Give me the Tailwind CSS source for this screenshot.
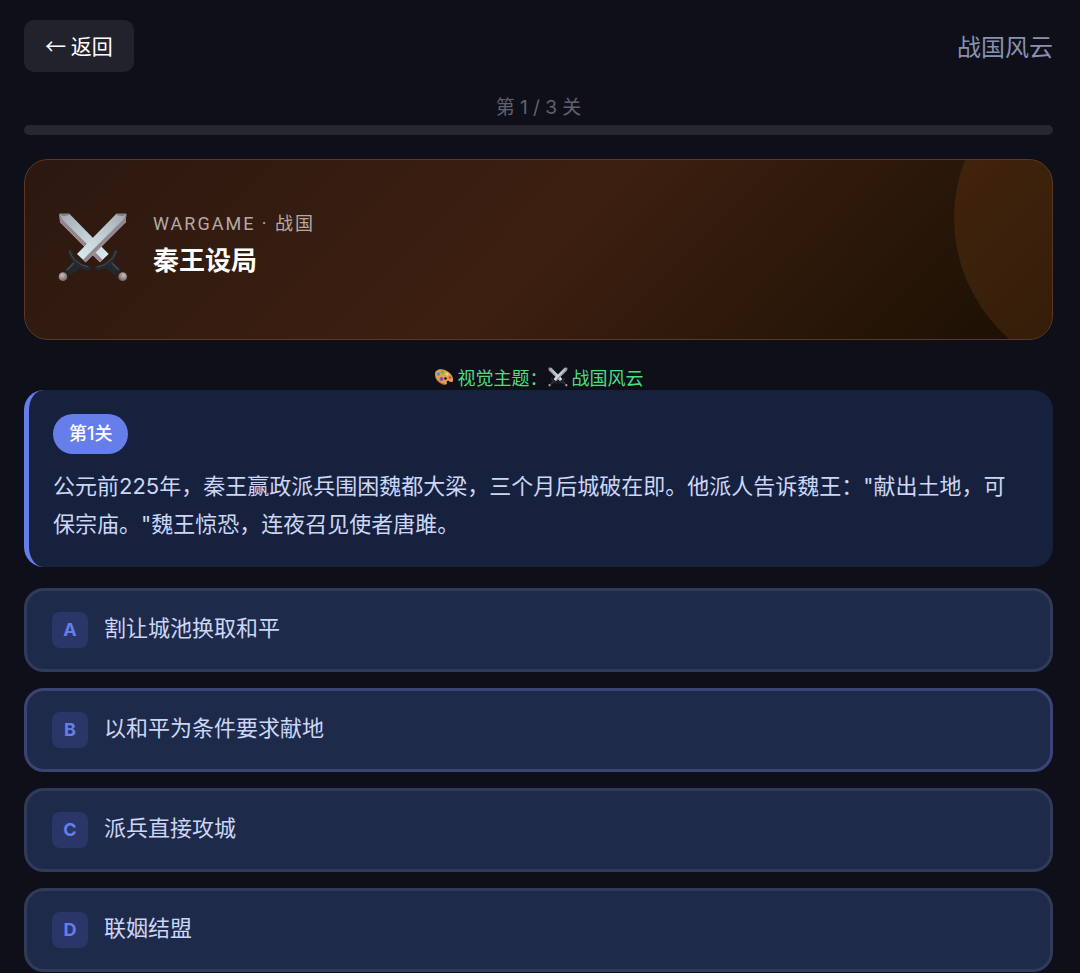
<!DOCTYPE html>
<html lang="zh-CN">
<head>
    <meta charset="UTF-8">
    <title>战国风云</title>
    <meta name="viewport" content="width=device-width, initial-scale=1.0">
    <!-- Tailwind CSS CDN -->
    <script src="https://cdn.jsdelivr.net/npm/@tailwindcss/browser@4"></script>
</head>
<body class="bg-[#0f0f1a] min-h-screen text-white font-[Inter,'Noto_Sans_CJK_SC',sans-serif]">

    <!-- Shared icons -->
    <svg class="absolute size-0" aria-hidden="true">
        <defs>
            <linearGradient id="blade" x1="0" y1="1" x2="1" y2="0">
                <stop offset="0" stop-color="#d8eef2"/>
                <stop offset="0.5" stop-color="#c3d0d6"/>
                <stop offset="1" stop-color="#a3a8b0"/>
            </linearGradient>
            <radialGradient id="pommel" cx="0.4" cy="0.35" r="0.7">
                <stop offset="0" stop-color="#c9bdbd"/>
                <stop offset="1" stop-color="#6c5f60"/>
            </radialGradient>
            <g id="sword">
                <path d="M198 42 L228 42 L226 68 L106 188 L80 163 Z" fill="url(#blade)"/>
                <path d="M228 42 L226 68 L106 188 L98 180 L218 60 Z" fill="#94868f"/>
                <path d="M198 42 L228 42 L218 50 L200 47 Z" fill="#7f8289"/>
                <path d="M80 176 L100 196 L60 228 L42 211 Z" fill="#23282e"/>
                <path d="M74 186 L50 211" stroke="#454f58" stroke-width="4"/>
                <path d="M60 156 C64 180 88 203 116 206" fill="none" stroke="#26292d" stroke-width="13" stroke-linecap="round"/>
                <path d="M58 154 C64 178 88 198 114 201" fill="none" stroke="#4a4e51" stroke-width="3"/>
                <circle cx="38" cy="231" r="13" fill="url(#pommel)"/>
            </g>
            <symbol id="swords" viewBox="20 34 216 216">
                <use href="#sword" transform="translate(255 0) scale(-1 1)"/>
                <use href="#sword"/>
            </symbol>
        </defs>
    </svg>

    <main class="pl-6 pr-[27px] pt-5">

        <header class="flex items-center justify-between font-['Noto_Sans_CJK_SC',sans-serif]">
            <button type="button" class="h-[52px] px-[21px] rounded-[10px] bg-[#22222d] hover:bg-[#2c2c38] text-[21px]">← 返回</button>
            <h1 class="text-2xl text-[#8892b0]">战国风云</h1>
        </header>

        <!-- Progress -->
        <div class="mt-5">
            <p id="progress-label" class="mb-px text-center text-[19px] leading-8 text-[#62626d]">第 1 / 3 关</p>
            <div role="progressbar" aria-labelledby="progress-label" aria-valuemin="0" aria-valuemax="3" aria-valuenow="0"
                 class="h-[10px] rounded-full bg-[#272731]"></div>
        </div>

        <!-- Scene banner -->
        <section class="relative overflow-hidden mt-6 flex items-center gap-6 px-8 pt-[50px] pb-[55px] rounded-3xl border border-[#5c3820] bg-linear-135 from-[#2c1810] via-[#3d1f10] to-[#1a1004]">
            <div class="absolute -top-[102px] -right-[222px] size-80 rounded-full bg-[#cd6e28]/15"></div>
            <svg class="size-[72px] shrink-0" aria-hidden="true"><use href="#swords"/></svg>
            <div>
                <p class="text-lg leading-7 tracking-[2px] text-[#b5aaa5] font-[Roboto,'Noto_Sans_CJK_SC',sans-serif]">WARGAME · 战国</p>
                <h2 class="text-[26px] leading-[46px] font-bold">秦王设局</h2>
            </div>
        </section>

        <p class="mt-6 flex items-center justify-center text-lg leading-[26px] text-[#4ade80] font-['Noto_Sans_CJK_SC',sans-serif]">
            <svg class="size-5 mr-1" viewBox="0 0 20 20" aria-hidden="true">
                <path d="M1 7 C1 3 6 1 11 3 C16 5 20 10 19 14 C18 16 16 15 15 14 C13 13 12 15 13 16 C13 18 10 18 7 16 C3 14 1 11 1 7 Z" fill="#dfa250"/>
                <path d="M1 8 C2 13 6 16 12 17 C10 18.500 7 17 5 15.500 C2.500 13.500 1 11 1 8 Z" fill="#a96a2c"/>
                <circle cx="4.500" cy="7" r="1.800" fill="#3e9bd8"/>
                <circle cx="8.500" cy="5" r="1.700" fill="#58b85a"/>
                <circle cx="13" cy="7" r="1.600" fill="#f1d94b"/>
                <circle cx="16" cy="10.500" r="1.500" fill="#e0503c"/>
                <circle cx="7.500" cy="12" r="2" fill="#8f4bb5"/>
                <circle cx="11.500" cy="11.500" r="1.300" fill="#10101a"/>
            </svg>
            视觉主题：
            <svg class="size-5 mr-1" aria-hidden="true"><use href="#swords"/></svg>
            战国风云
        </p>

        <!-- Question -->
        <section class="pl-6 pr-8 py-6 rounded-[20px] border-l-[5px] border-[#667eea] bg-[#16213e]">
            <span class="inline-flex items-center h-10 px-4 rounded-full bg-[#667eea] text-lg font-medium align-top">第1关</span>
            <p class="mt-[13px] text-[22px] leading-[38px] text-[#ccd6f6]">公元前225年，秦王赢政派兵围困魏都大梁，三个月后城破在即。他派人告诉魏王："献出土地，可保宗庙。"魏王惊恐，连夜召见使者唐雎。</p>
        </section>

        <!-- Options -->
        <div class="mt-[21px] flex flex-col gap-4">
            <button type="button" class="flex items-start gap-4 px-[25px] py-[21px] rounded-[20px] border-3 border-[#2f3b59] hover:border-[#3b4474] bg-[#1e2a4a] text-left">
                <span class="size-9 shrink-0 flex items-center justify-center rounded-lg bg-[#2a3668] text-lg font-bold text-[#667eea]">A</span>
                <span class="text-[22px] leading-8 text-[#ccd6f6]">割让城池换取和平</span>
            </button>
            <button type="button" class="flex items-start gap-4 px-[25px] py-[21px] rounded-[20px] border-3 border-[#3b4474] bg-[#1e2a4a] text-left">
                <span class="size-9 shrink-0 flex items-center justify-center rounded-lg bg-[#2a3668] text-lg font-bold text-[#667eea]">B</span>
                <span class="text-[22px] leading-8 text-[#ccd6f6]">以和平为条件要求献地</span>
            </button>
            <button type="button" class="flex items-start gap-4 px-[25px] py-[21px] rounded-[20px] border-3 border-[#2f3b59] hover:border-[#3b4474] bg-[#1e2a4a] text-left">
                <span class="size-9 shrink-0 flex items-center justify-center rounded-lg bg-[#2a3668] text-lg font-bold text-[#667eea]">C</span>
                <span class="text-[22px] leading-8 text-[#ccd6f6]">派兵直接攻城</span>
            </button>
            <button type="button" class="flex items-start gap-4 px-[25px] py-[21px] rounded-[20px] border-3 border-[#2f3b59] hover:border-[#3b4474] bg-[#1e2a4a] text-left">
                <span class="size-9 shrink-0 flex items-center justify-center rounded-lg bg-[#2a3668] text-lg font-bold text-[#667eea]">D</span>
                <span class="text-[22px] leading-8 text-[#ccd6f6]">联姻结盟</span>
            </button>
        </div>

    </main>

</body>
</html>
